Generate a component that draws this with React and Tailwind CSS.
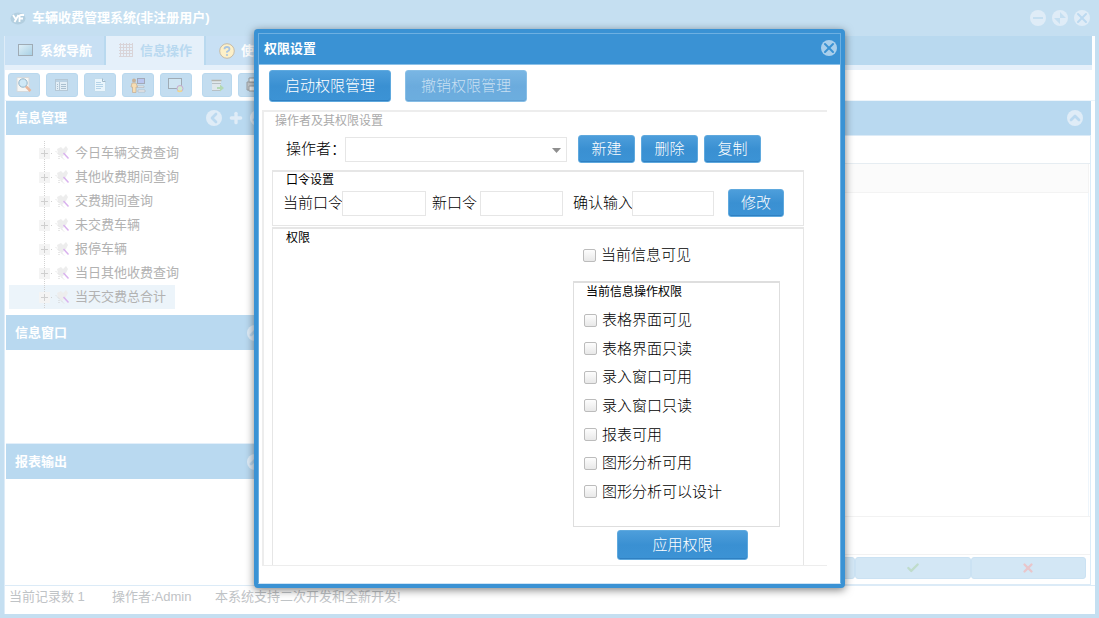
import { Check, ChevronLeft, ChevronUp, ChevronsLeft, ChevronsRight, Plus, X } from 'lucide-react';

const queries = ['今日车辆交费查询', '其他收费期间查询', '交费期间查询', '未交费车辆', '报停车辆', '当日其他收费查询', '当天交费总合计'];

const permissions = ['表格界面可见', '表格界面只读', '录入窗口可用', '录入窗口只读', '报表可用', '图形分析可用', '图形分析可以设计'];

function Logo() {
    return (
        <svg className="w-4 h-4" viewBox="0 0 16 16" fill="none">
            <ellipse cx="8" cy="8.500" rx="7.500" ry="6" fill="#b3cfe0" />
            <path d="M3 5l3 4.500M8.500 5L4.500 12M9.500 12V6.500Q9.500 5 11 5h3M9 8.500h4" stroke="#fff" strokeWidth="1.800" />
        </svg>
    );
}

function ScreenIcon() {
    return (
        <svg className="w-4 h-4" viewBox="0 0 16 16">
            <defs>
                <linearGradient id="screen" x1="0" y1="0" x2="1" y2="1">
                    <stop offset="0" stopColor="#e0f0f8" />
                    <stop offset="1" stopColor="#a6cfe4" />
                </linearGradient>
            </defs>
            <rect x="0.500" y="1.500" width="14" height="11" fill="url(#screen)" stroke="#9fabb5" />
        </svg>
    );
}

function GridIcon() {
    return (
        <svg className="w-[15px] h-[15px]" viewBox="0 0 15 15" fill="none">
            <path d="M0 1.500h14M0 4.500h14M0 7.500h14M0 10.500h14M0 13.500h14M1.500 0v14M4.500 0v14M7.500 0v14M10.500 0v14M13.500 0v14" stroke="#d9d4d8" />
        </svg>
    );
}

function HelpIcon() {
    return (
        <svg className="w-4 h-4" viewBox="0 0 16 16" fill="none">
            <circle cx="8" cy="8" r="7.300" fill="#fdf0c8" stroke="#c5bba8" />
            <path d="M5.500 6.300Q5.500 4 8 4t2.500 2.200Q10.500 7.500 8 8.800v1" stroke="#a9c5e2" strokeWidth="1.800" />
            <circle cx="8" cy="12" r="1.100" fill="#a9c5e2" />
        </svg>
    );
}

function PreviewIcon() {
    return (
        <svg className="w-4 h-4" viewBox="0 0 16 16" fill="none">
            <path d="M1 .5h12v14H1z" fill="#f6f6f4" stroke="#d5dadd" />
            <circle cx="7" cy="6" r="4.200" fill="#cfe8f6" stroke="#93b4c8" />
            <path d="M10 9.500l4.500 4.500" stroke="#e8b79c" strokeWidth="2.500" />
        </svg>
    );
}

function FormIcon() {
    return (
        <svg className="w-4 h-4" viewBox="0 0 16 16" fill="none">
            <rect x="1.500" y="2.500" width="12" height="11" fill="#e2eef6" stroke="#b5c8d6" />
            <path d="M2 4h11" stroke="#bcd3e4" strokeWidth="2" />
            <path d="M5.500 5v8" stroke="#b5c8d6" />
            <path d="M3 7.500h1M3 9.500h1M3 11.500h1M7 7.500h5M7 9.500h5M7 11.500h5" stroke="#a9bfcf" />
        </svg>
    );
}

function PageIcon() {
    return (
        <svg className="w-4 h-4" viewBox="0 0 16 16" fill="none">
            <path d="M2.500 1.500h8l3 3v10h-11z" fill="#e9f5fc" stroke="#c3dcec" />
            <path d="M10.500 1.500v3h3" stroke="#a0b8c8" />
            <path d="M4 5.500h5M4 7.500h7M4 9.500h7M4 11.500h5" stroke="#b4d3e8" />
        </svg>
    );
}

function OperatorIcon() {
    return (
        <svg className="w-4 h-4" viewBox="0 0 16 16" fill="none">
            <rect x="7.500" y="1.500" width="7" height="5" fill="#b9c6f0" stroke="#a3a9b8" />
            <path d="M7 9h7v1.500H7zM8 13h7v2H8z" fill="#f0f2f4" stroke="#b1b8bd" strokeWidth=".7" />
            <circle cx="4" cy="3.500" r="2" fill="#c7b29b" />
            <path d="M2 6h4l1.500 4H6v5.500H2.500V10H1z" fill="#f7ddb2" stroke="#c7b29b" strokeWidth=".8" />
        </svg>
    );
}

function ScreenFindIcon() {
    return (
        <svg className="w-4 h-4" viewBox="0 0 16 16" fill="none">
            <rect x=".5" y="1.500" width="13" height="10" fill="#cfe5f2" stroke="#9fabb5" />
            <circle cx="12" cy="11.500" r="3" fill="#cfe9d2" stroke="#c9a9d4" />
            <path d="M9.500 13.500a3 3 0 0 0 4.500 0" stroke="#f0d68c" strokeWidth="1.500" />
        </svg>
    );
}

function ExportIcon() {
    return (
        <svg className="w-4 h-4" viewBox="0 0 16 16" fill="none">
            <rect x="3" y="3" width="9" height="11" fill="#dfe7eb" />
            <path d="M2.500 3.500h10" stroke="#b4b4ac" strokeWidth="1.500" />
            <path d="M3 6.500h9M3 13.500h8" stroke="#b7c0c5" />
            <path d="M8 10h3V7.500l4 3.500-4 3.500V12H8z" fill="#b3d9b3" />
        </svg>
    );
}

function PrinterIcon() {
    return (
        <svg className="w-4 h-4" viewBox="0 0 16 16" fill="none">
            <path d="M2 5h12v8H2z" fill="#c6c9cb" stroke="#9a9fa3" />
            <path d="M4 1h8v4H4zM4 9h8v5H4z" fill="#f2f2f2" stroke="#9a9fa3" />
        </svg>
    );
}

const tools = [
    { name: '预览', icon: PreviewIcon },
    { name: '表单', icon: FormIcon },
    { name: '文档', icon: PageIcon },
    { name: '操作员', icon: OperatorIcon },
    { name: '窗口', icon: ScreenFindIcon },
];

// Dotted tree line, the [+] box and the query icon of one node
function NodeIcon() {
    return (
        <svg className="w-[34px] h-6 shrink-0" viewBox="0 0 34 24" fill="none">
            <path d="M5.500 0v24M6 12.500h8" stroke="#d2d2d2" strokeDasharray="1 1" />
            <rect x="0" y="7" width="11" height="11" fill="#f4f4f4" />
            <path d="M2 12.500h7M5.500 9v7" stroke="#cfcfcf" />
            <path d="M18 8l4-2 2 2 3-3 2 3-2 4-4 4-4-4z" fill="#ededed" />
            <path d="M17 10.500l8 8M20 15v3" stroke="#d0d0d0" strokeDasharray="1 1" />
            <path d="M24.500 12l5 5.500" stroke="#d9b2ee" strokeWidth="1.500" />
        </svg>
    );
}

function RoundButton({ label, children }) {
    return (
        <button aria-label={label} className="flex w-4 h-4 items-center justify-center rounded-full bg-[#dfecf7] text-[#bbd9f0]">
            {children}
        </button>
    );
}

function PanelHeader({ title, className = 'h-[35px]', children }) {
    return (
        <div className={`flex shrink-0 items-center justify-between bg-[#b9d9f0] pl-[9px] ${className}`}>
            <h2 className="font-bold text-white">{title}</h2>
            <div className="flex items-center gap-[6px]">{children}</div>
        </div>
    );
}

function BlueButton({ className, children, ...props }) {
    return (
        <button
            className={`shrink-0 rounded-[3px] border border-[#5fa9de] bg-linear-to-b from-[#4d9edb] from-0% via-[#3a90d2] via-50% to-[#3c93d5] text-[15px] font-light text-white shadow-[inset_0_-1px_0_#2f80c2] disabled:opacity-75 disabled:text-[#b5d5ee] ${className}`}
            {...props}
        >
            {children}
        </button>
    );
}

function TickBox({ label }) {
    return (
        <label className="flex items-center gap-[5px] text-[15px] leading-4 font-light">
            <input type="checkbox" className="w-[13px] h-[13px] shrink-0 appearance-none rounded-[2px] border border-[#bcbcbc] bg-linear-to-b from-[#fdfdfd] to-[#e8e8e8] checked:bg-[#3a92d4]" />
            {label}
        </label>
    );
}

function Sidebar() {
    return (
        <aside className="flex w-[264px] shrink-0 flex-col">
            <PanelHeader title="信息管理" className="h-[34px] pr-[4px]">
                <RoundButton label="收起"><ChevronLeft className="w-4 h-4 shrink-0" strokeWidth={4} /></RoundButton>
                <button aria-label="新增" className="w-4 h-4 text-[#dfecf7]"><Plus className="w-4 h-4" strokeWidth={5} /></button>
                <RoundButton label="折叠"><ChevronUp className="w-4 h-4 shrink-0" strokeWidth={4} /></RoundButton>
            </PanelHeader>
            <ul className="py-[6px] pl-[3px] text-[#b2b2b2]">
                {queries.map((query, i) => (
                    <li key={query} className={`flex h-6 w-[166px] items-center whitespace-nowrap pl-[30px] ${i === queries.length - 1 ? 'bg-[#ecf4fa]' : ''}`}>
                        <NodeIcon />
                        <span className="pl-[2px]">{query}</span>
                    </li>
                ))}
            </ul>
            <PanelHeader title="信息窗口" className="h-[35px] pr-[7px]">
                <RoundButton label="折叠"><ChevronUp className="w-4 h-4 shrink-0" strokeWidth={4} /></RoundButton>
            </PanelHeader>
            <div className="h-[94px] border-b border-[#e3effa]" />
            <PanelHeader title="报表输出" className="h-[35px] pr-[7px]">
                <RoundButton label="折叠"><ChevronUp className="w-4 h-4 shrink-0" strokeWidth={4} /></RoundButton>
            </PanelHeader>
            <div className="flex-1" />
        </aside>
    );
}

function RecordPanel() {
    const buttons = [
        { name: '首条', icon: <ChevronsLeft className="w-4 h-4" /> },
        { name: '上条', icon: <ChevronLeft className="w-4 h-4" /> },
        { name: '末条', icon: <ChevronsRight className="w-4 h-4" /> },
        { name: '新增', icon: <Plus className="w-4 h-4" /> },
        { name: '编辑', icon: null },
        { name: '保存', icon: <Check className="w-[14px] h-[14px] text-[#bfdccb]" strokeWidth={4} /> },
        { name: '取消', icon: <X className="w-[14px] h-[14px] text-[#e9c6cb]" strokeWidth={4} /> },
    ];

    return (
        <section className="ml-[5px] flex flex-1 flex-col">
            <PanelHeader title="" className="h-[34px] pr-2">
                <RoundButton label="折叠"><ChevronUp className="w-4 h-4 shrink-0" strokeWidth={4} /></RoundButton>
            </PanelHeader>
            <div className="flex flex-1 flex-col border border-[#dcebf7]">
                <div className="h-7 border-b border-[#e6edf2]" />
                <div className="mr-px h-[29px] border-b border-r border-[#f3f3f3] bg-[#fbfbfb]" />
                <div className="mr-px flex-1 border-r border-[#eef5fb]" />
                <div className="h-[38px] border-t border-[#f2f2f2]" />
                <div className="border-t border-[#f2f2f2] pt-[2px] pr-1 pb-[5px] pl-[2px]">
                    <div className="grid grid-cols-7">
                        {buttons.map((button) => (
                            <button key={button.name} aria-label={button.name} className="flex h-[22px] items-center justify-center rounded-[3px] border border-[#cbe2f3] bg-[#d3e7f5] text-white">
                                {button.icon}
                            </button>
                        ))}
                    </div>
                </div>
            </div>
        </section>
    );
}

function PermissionDialog() {
    return (
        <div role="dialog" aria-labelledby="dialog-title" className="w-[591px] max-w-full rounded-[4px] border-4 border-[#3a92d4] bg-white text-black shadow-[0_2px_8px_rgba(0,0,0,0.5)]">
            <div className="border border-[#6db0e2] border-b-[#cfe4f5]">
                {/* Title bar */}
                <header className="flex h-[31px] items-center justify-between border-b border-[#8cc1e8] bg-[#3a92d4] pl-[5px] pr-[3px]">
                    <h1 id="dialog-title" className="font-bold text-white">权限设置</h1>
                    <button aria-label="关闭" className="mb-[3px] flex w-4 h-4 items-center justify-center rounded-full bg-[#a9cfec] text-[#3a92d4]">
                        <X className="w-4 h-4 shrink-0" strokeWidth={3} />
                    </button>
                </header>

                {/* Switching the whole permission system on or off */}
                <div className="flex gap-[14px] pt-[5px] pl-[10px]">
                    <BlueButton className="h-8 w-[122px]">启动权限管理</BlueButton>
                    <BlueButton className="h-8 w-[122px]" disabled>撤销权限管理</BlueButton>
                </div>

                <fieldset className="mt-[8px] mr-[13px] mb-[17px] ml-[3px] border-t-2 border-b border-l-2 border-[#ededed]">
                    <legend className="float-left w-full pt-px pl-[11px] text-xs leading-4 text-[#aaaaaa]">操作者及其权限设置</legend>

                    <div className="clear-both flex items-center pt-[6px] pl-[22px]">
                        <label htmlFor="operator" className="w-[59px] whitespace-nowrap text-[15px] font-light">操作者：</label>
                        <div className="relative mr-[11px]">
                            <select id="operator" className="block h-[25px] w-[222px] appearance-none border border-[#e6e6e6] bg-white px-2" />
                            <svg className="pointer-events-none absolute top-[11px] right-[6px] w-[9px] h-[5px]" viewBox="0 0 9 5">
                                <path d="M0 0h9L4.500 5z" fill="#8e8e8e" />
                            </svg>
                        </div>
                        <div className="flex gap-[6px]">
                            <BlueButton className="h-7 w-[57px]">新建</BlueButton>
                            <BlueButton className="h-7 w-[57px]">删除</BlueButton>
                            <BlueButton className="h-7 w-[57px]">复制</BlueButton>
                        </div>
                    </div>

                    <fieldset className="mt-[7px] mr-[23px] ml-2 border border-t-2 border-[#e6e6e6] pb-[8px]">
                        <legend className="float-left w-full pl-[13px] text-xs leading-4">口令设置</legend>
                        <div className="clear-both flex items-center whitespace-nowrap pt-px pl-[10px] text-[15px] font-light">
                            <label htmlFor="current" className="w-[59px]">当前口令</label>
                            <input id="current" type="password" className="mr-[6px] h-[25px] w-[84px] border border-[#e6e6e6] px-1" />
                            <label htmlFor="next" className="w-12">新口令</label>
                            <input id="next" type="password" className="mr-[10px] h-[25px] w-[83px] border border-[#e6e6e6] px-1" />
                            <label htmlFor="repeat" className="w-[59px]">确认输入</label>
                            <input id="repeat" type="password" className="mr-[14px] h-[25px] w-[82px] border border-[#e6e6e6] px-1" />
                            <BlueButton className="h-7 w-[56px]">修改</BlueButton>
                        </div>
                    </fieldset>

                    <fieldset className="mt-px mr-[23px] ml-2 border-x border-t-2 border-[#e6e6e6] pb-[5px]">
                        <legend className="float-left w-full pl-[13px] pt-px text-xs leading-4">权限</legend>
                        <div className="clear-both mr-[23px] ml-auto w-[207px]">
                            <div className="pt-px pl-[10px]">
                                <TickBox label="当前信息可见" />
                            </div>
                            <fieldset className="mt-[18px] border border-t-2 border-[#dedede] pb-5">
                                <legend className="float-left w-full pl-[12px] pt-px text-xs leading-4">当前信息操作权限</legend>
                                <div className="clear-both grid h-[206px] grid-rows-7 pt-[6px] pl-[10px]">
                                    {permissions.map((name) => (
                                        <TickBox key={name} label={name} />
                                    ))}
                                </div>
                            </fieldset>
                            <BlueButton className="mt-[3px] ml-[44px] block h-[30px] w-[131px]">应用权限</BlueButton>
                        </div>
                    </fieldset>
                </fieldset>
            </div>
        </div>
    );
}

export default function App() {
    return (
        <div className="relative flex min-h-screen flex-col bg-[#c5dff1] font-['Liberation_Sans','Noto_Sans_CJK_SC',sans-serif] text-[13px]">
            {/* Window title */}
            <header className="flex h-9 shrink-0 items-center pr-[9px] pl-[10px] text-white">
                <Logo />
                <h1 className="flex-1 pl-[6px] font-bold">车辆收费管理系统(非注册用户)</h1>
                <div className="flex gap-[6px]">
                    <RoundButton label="最小化">
                        <svg className="w-3 h-3" viewBox="0 0 12 12"><path d="M1 5h10v2H1z" fill="#c5dff1" /></svg>
                    </RoundButton>
                    <RoundButton label="还原">
                        <svg className="w-3 h-3" viewBox="0 0 12 12"><path d="M6 0v6h6zM6 12V6H0z" fill="#c5dff1" /></svg>
                    </RoundButton>
                    <RoundButton label="关闭"><X className="w-4 h-4 shrink-0" strokeWidth={3} /></RoundButton>
                </div>
            </header>

            <div className="mx-1 mb-1 flex flex-1 flex-col border-l border-[#deecf8] bg-white">
                {/* Main tabs */}
                <nav className="mr-[3px] flex h-[34px] shrink-0 gap-[2px] border-b-[5px] border-[#e5f0fa] bg-[#b9d9ef] font-bold text-white">
                    <button className="flex w-[99px] items-center gap-[6px] bg-[#c8e0f4] pl-[13px]"><ScreenIcon />系统导航</button>
                    <button className="flex w-[98px] items-center gap-[6px] bg-[#e5f0fa] pl-[13px] text-[#b9d9f0]"><GridIcon />信息操作</button>
                    <button className="flex w-[98px] items-center gap-[6px] bg-[#c8e0f4] pl-[13px]"><HelpIcon />使</button>
                </nav>

                {/* Toolbar */}
                <div className="flex h-[31px] shrink-0 items-center gap-[6px] border-b border-[#edf5fb] pl-[3px]">
                    {tools.map((tool) => (
                        <button key={tool.name} aria-label={tool.name} className="flex h-6 w-8 items-center justify-center rounded-[3px] border border-[#b9d8ee] bg-[#c3ddf0]">
                            <tool.icon />
                        </button>
                    ))}
                    <button aria-label="导出" className="ml-1 flex h-6 w-[30px] items-center justify-center rounded-[3px] border border-[#b9d8ee] bg-[#c3ddf0]"><ExportIcon /></button>
                    <button aria-label="打印" className="flex h-6 w-[30px] items-center justify-center rounded-[3px] border border-[#b9d8ee] bg-[#c3ddf0]"><PrinterIcon /></button>
                </div>

                <main className="flex flex-1 pr-1 pl-px">
                    <Sidebar />
                    <RecordPanel />
                </main>

                <footer className="flex h-[29px] shrink-0 items-center border-t border-[#dcebf7] pb-[6px] pl-1 text-[#bfc3c6]">
                    <span className="w-[103px]">当前记录数 1</span>
                    <span className="w-[103px]">操作者:Admin</span>
                    <span>本系统支持二次开发和全新开发!</span>
                </footer>
            </div>

            <div className="absolute inset-x-0 top-0 flex justify-center pt-[29px]">
                <PermissionDialog />
            </div>
        </div>
    );
}
